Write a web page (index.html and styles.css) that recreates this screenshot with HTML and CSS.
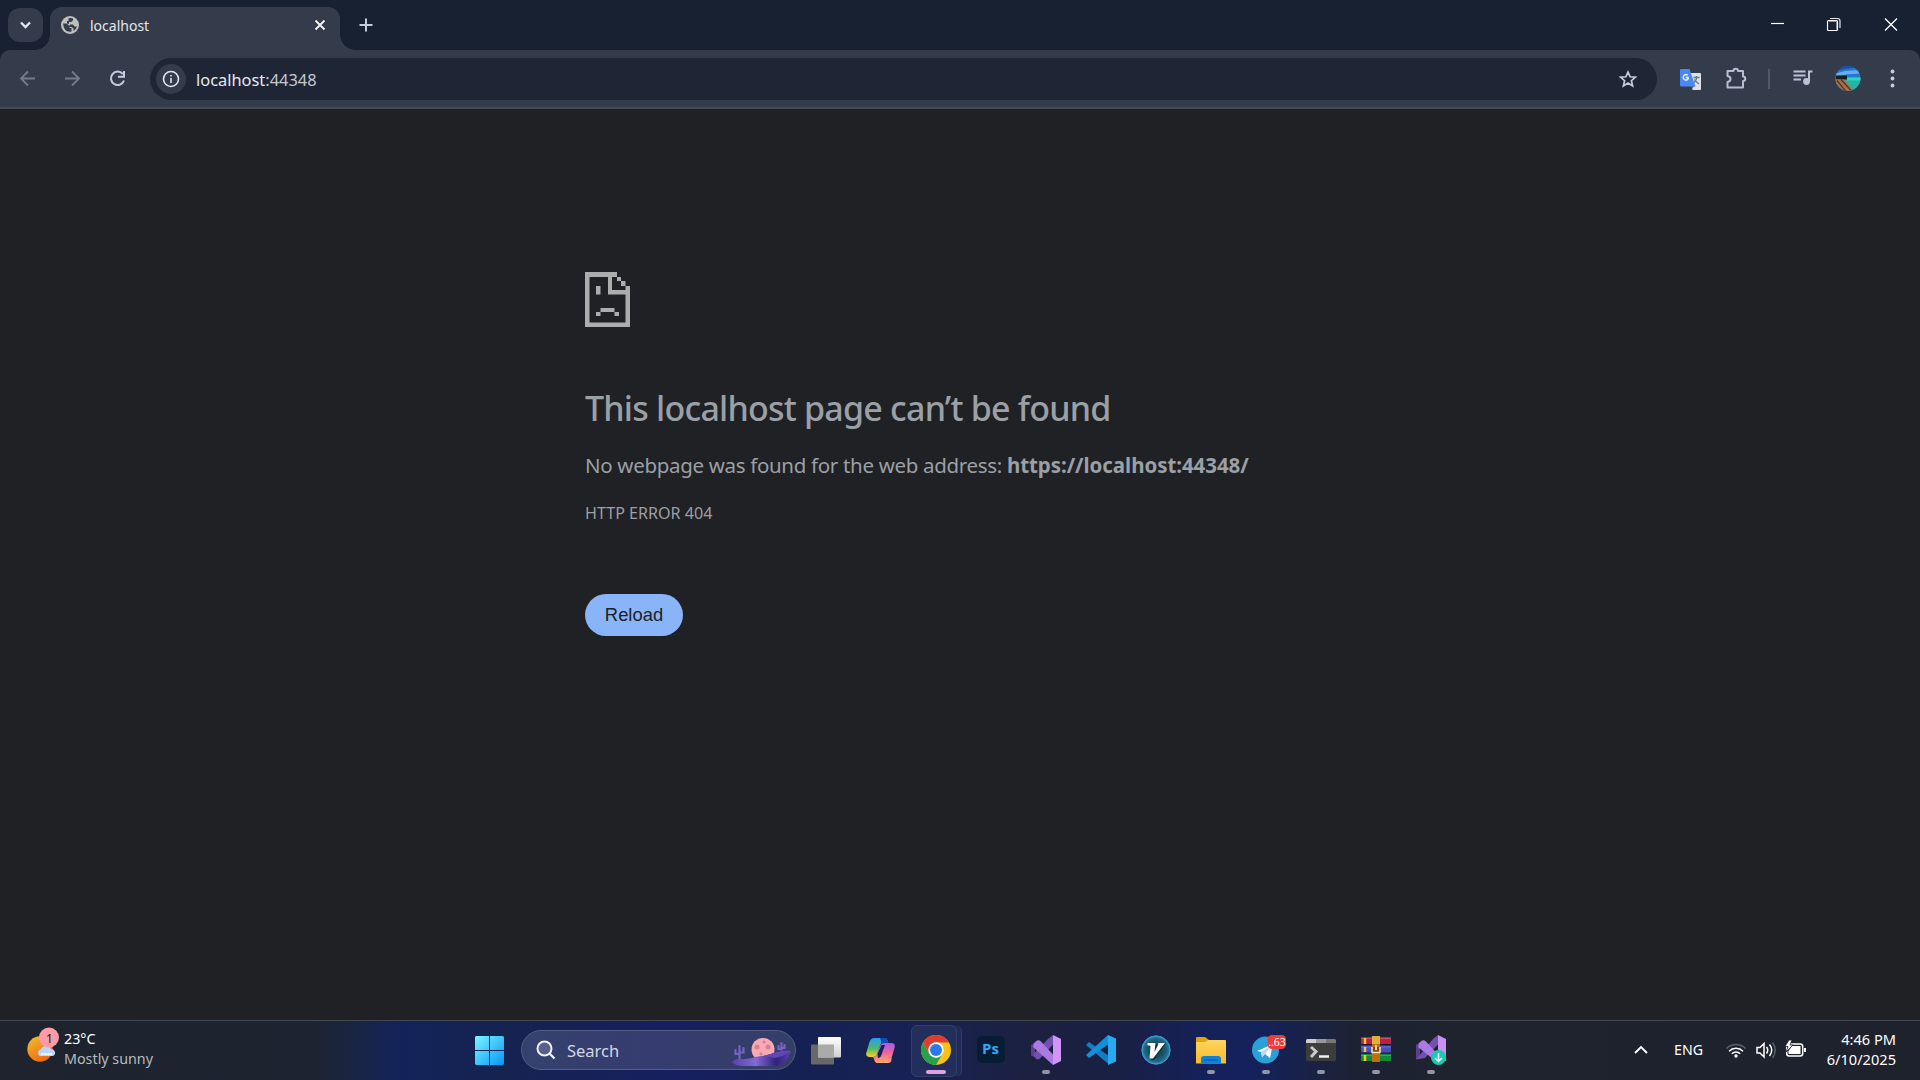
FILE: index.html
```html
<!DOCTYPE html>
<html lang="en">
<head>
<meta charset="utf-8">
<title>localhost</title>
<link rel="stylesheet" href="styles.css">
</head>
<body>
<div class="screen">
  <header class="tabstrip">
    <button class="tab-search" aria-label="Search tabs"><svg width="35" height="34"><path d="M13 14.5l4.5 4.5 4.5-4.5" fill="none" stroke="#e3e6ef" stroke-width="2.3"/></svg></button>
    <div class="tab">
      <svg class="globe" width="18" height="18" viewBox="0 0 18 18"><circle cx="9" cy="9" r="9" fill="#bfbfbf"/><path d="M2 7.500h3.500l3 2.500v2h2v3.500Q3 17 2 7.500zM7.500 2.200Q10 1.600 12 2.500v2L10 6H8v2l-2-.5V5h1.500zM9 8.500h3l1.500 2H16Q15 14 12.500 15v-2.500L10.500 11H8z" fill="#343c4c"/></svg>
      <span class="tab-title">localhost</span>
      <svg class="tab-close" width="12" height="12"><path d="M1.500 1.500l9 9M10.500 1.500l-9 9" stroke="#f1f2f5" stroke-width="1.900"/></svg>
    </div>
    <svg class="new-tab" width="14" height="14"><path d="M7 .5v13M.5 7h13" stroke="#c5cbdd" stroke-width="2"/></svg>
    <div class="window-controls">
      <svg width="57" height="50"><path d="M22 23.500h13" stroke="#fff" stroke-width="1.200"/></svg>
      <svg width="57" height="50"><path d="M24 18.500h7.500q2.500 0 2.500 2.500v7" fill="none" stroke="#e6e8ec" stroke-width="1.200"/><rect x="21.500" y="20.500" width="10" height="10" rx="1" fill="none" stroke="#fff" stroke-width="1.200"/><path d="M22.500 21.500h8v8" fill="none" stroke="#8a909b"/></svg>
      <svg width="57" height="50"><path d="M22 18.500l12 12M34 18.500l-12 12" stroke="#fff" stroke-width="1.300"/></svg>
    </div>
  </header>

  <nav class="toolbar">
    <svg class="slot" viewBox="-22.5 -28.5 45 57"><path d="M7.500 0H-6M.5-7l-7 7 7 7" fill="none" stroke="#727a8b" stroke-width="1.900"/></svg>
    <svg class="slot" viewBox="-22.5 -28.5 45 57"><path d="M-7.500 0H6M-.5-7l7 7-7 7" fill="none" stroke="#727a8b" stroke-width="1.900"/></svg>
    <svg class="slot reload-icon" viewBox="-22.5 -28.5 46 57"><path d="M5.300-4.500A6.700 6.700 0 1 0 6.500 2M6.500-7.500v5.800H.5" fill="none" stroke="#c6cce0" stroke-width="2"/></svg>
    <div class="omnibox">
      <span class="site-info"><svg width="18" height="18" viewBox="0 0 18 18"><circle cx="9" cy="9" r="7.500" fill="none" stroke="#e1e4ee" stroke-width="1.600"/><path d="M9 8v5M9 5v1.600" stroke="#e1e4ee" stroke-width="1.600"/></svg></span>
      <span class="url"><b>localhost</b>:44348</span>
      <svg class="star" width="20" height="20" viewBox="-10 -10.5 20 20"><path d="M0-7.500L2.100-2.700 7.400-2.300 3.400 1.200 4.600 6.400 0 3.600-4.600 6.400-3.400 1.200-7.400-2.300-2.100-2.700z" fill="none" stroke="#c9cdda" stroke-width="1.700"/></svg>
    </div>
    <svg class="slot translate" viewBox="-22.5 -28.5 45 57"><path d="M0-5.500H9.500q1 0 1 1v15q0 1-1 1H2z" fill="#dfe1e3"/><path d="M3-1h6M6-2.500V-1c0 3-2 5-4 6M4 1c1 2 3 3.500 4.500 4.500" fill="none" stroke="#5d7d86" stroke-width="1.300"/><path d="M1 6.500h4l-4 4z" fill="#3059c9"/><path d="M-9.500-9.500H-1L5 8H-9.500q-1 0-1-1v-15.500q0-1 1-1z" fill="#4a88f5"/><path d="M-1.800-1h-3M-2.800-3.200A2.700 2.700 0 1 0-1.900-.8" fill="none" stroke="#fff" stroke-width="1.300"/></svg>
    <svg class="slot" viewBox="-23 -28.500 45 57"><path d="M-8-7.500h5.500a2 2 0 0 1 4.500 0H7v5.500a2.200 2.200 0 0 1 0 4.500V9H-8.500V3.500q3-.5 3-3t-3-3V-7.500z" fill="none" stroke="#b7bed2" stroke-width="2" stroke-linejoin="round"/></svg>
    <span class="divider"></span>
    <svg class="slot" viewBox="-22.500 -28.500 45 57"><path d="M-10-7H2M-10-3H2M-10 1h7.500M5.500 3V-7h3.500" fill="none" stroke="#bbc2d7" stroke-width="2"/><circle cx="3" cy="3" r="3.400" fill="#bbc2d7"/></svg>
    <svg class="slot avatar" viewBox="-22 -28.500 44 57"><defs><clipPath id="face"><circle r="12.500"/></clipPath></defs><g clip-path="url(#face)"><path d="M-13-13h26V0h-26z" fill="#2478cf"/><path d="M-13-13h26v3Q2-12-13-7z" fill="#1c4fa5"/><path d="M-13-5Q0-9 13-8v3Q0-5-13-2z" fill="#65aeea"/><path d="M-13-1h26v14h-26z" fill="#22b5a5"/><path d="M-1-1h14v3H-1z" fill="#2bd5c4"/><path d="M-12-3h11v4h-11z" fill="#171e22"/><path d="M-13 1h9L7 13h-20z" fill="#a76f4b"/><path d="M-11 2l9 11M-7 1L4 13M-13 6l6 7" stroke="#49332c" stroke-width="1.200"/></g></svg>
    <svg class="slot" viewBox="-22.500 -28.500 45 57"><g fill="#c6cce0"><circle cy="-7" r="1.900"/><circle r="1.900"/><circle cy="7" r="1.900"/></g></svg>
  </nav>

  <main class="page">
    <section class="error">
      <svg class="sad-page" width="45" height="55" viewBox="0 0 45 55"><path d="M0 0h32v5H27v13h13.500V14H45v41H0zM4.500 5v45.500h36V22.500H23V5z" fill="#adadad" fill-rule="evenodd"/><path d="M32 5h4v4h-4zM36 9h4.500v5H36zM11 14h4.500v8.500H11zM15.500 36H29.500v4H34v4h-4.500v-4h-14v4H11v-4h4.500z" fill="#adadad"/></svg>
      <h1>This localhost page can’t be found</h1>
      <p class="summary">No webpage was found for the web address: <strong>https://localhost:44348/</strong></p>
      <p class="code">HTTP ERROR 404</p>
      <button class="reload">Reload</button>
    </section>
  </main>

  <footer class="taskbar">
    <div class="weather">
      <svg width="37" height="40" viewBox="26 1025 37 40"><defs><linearGradient id="sun" x2=".6" y2="1"><stop stop-color="#f4bd32"/><stop offset="1" stop-color="#ef6a10"/></linearGradient></defs><circle cx="40" cy="1049" r="12.700" fill="url(#sun)"/><path d="M40 1056a3.500 3.500 0 0 1 .5-6.500q2-4 6-3.500t4.500 3.500a3.300 3.300 0 0 1 1.500 6.500z" fill="#b9d7fa"/><path d="M41 1054h11" stroke="#e8f1ff" stroke-width="2"/><circle cx="49" cy="1037.500" r="10" fill="#ff9ba6"/><text x="49.5" y="1042.500" class="badge-text">1</text></svg>
      <div class="weather-text"><span>23°C</span><span class="muted">Mostly sunny</span></div>
    </div>

    <div class="apps">
      <svg class="start" width="29" height="29" viewBox="0 0 29 29"><defs><linearGradient id="win" gradientUnits="userSpaceOnUse" x2="29" y2="29"><stop stop-color="#7af5ff"/><stop offset="1" stop-color="#0695fb"/></linearGradient></defs><path d="M1 0h13v14H0V1zM15 0h13l1 1v13H15zM0 15h14v14H1l-1-1zM15 15h14v13l-1 1H15z" fill="url(#win)"/></svg>
      <div class="search">
        <svg width="20" height="20" viewBox="0 0 20 20"><circle cx="8.500" cy="8.500" r="7" fill="#56618c" stroke="#eef0f6" stroke-width="2"/><path d="M13.500 13.500l5 5" stroke="#eef0f6" stroke-width="2.300"/></svg>
        <span>Search</span>
        <svg class="desert" width="62" height="30" viewBox="0 0 62 30"><defs><linearGradient id="dune"><stop stop-color="#5840ad"/><stop offset=".4" stop-color="#826bd4"/><stop offset=".75" stop-color="#33217c"/><stop offset="1" stop-color="#5943ad"/></linearGradient></defs><circle cx="33" cy="12.500" r="11.500" fill="#f8a9b4"/><g fill="#dd7e91"><circle cx="27" cy="10" r="2.500"/><circle cx="34" cy="5" r="1.500"/><circle cx="38" cy="10" r="2.500"/><circle cx="31" cy="17" r="1.500"/></g><path d="M9.500 24V9M5.500 13v4h4M13.500 11v4.500h-4M51.500 16V6M48.500 9v3h3M54.500 8v3h-3" fill="none" stroke="#7862c8" stroke-width="2.200" stroke-linecap="round"/><path d="M2 25q4-4 9-3 9 0 14-2 13-1 22-5.500 7-2 14-.5-3 12-14 15H13Q5 29 2 25z" fill="url(#dune)"/><path d="M24 20.500Q38 19 46 15q8-2 15-1-6 5-16 7-9-2-21-.5z" fill="#5f48b4"/></svg>
      </div>

      <span class="app"><svg viewBox="0 0 30 30"><defs><linearGradient id="tv" x2="0" y2="1"><stop stop-color="#fff"/><stop offset="1" stop-color="#cfcfcf"/></linearGradient></defs><rect y="9.500" width="23" height="20" rx="1" fill="#686868"/><rect x="7" y="2" width="23" height="20.500" rx="1" fill="url(#tv)"/><path d="M7 9.500h16v13H7z" fill="#aaa"/></svg></span>
      <span class="app"><svg viewBox="0 0 30 30"><defs><linearGradient id="cpa" x2="0" y2="1"><stop stop-color="#229df4"/><stop offset=".55" stop-color="#4fb96c"/><stop offset="1" stop-color="#ffd41c"/></linearGradient><linearGradient id="cpb" x2="0" y2="1"><stop stop-color="#a858ee"/><stop offset=".5" stop-color="#f1649b"/><stop offset="1" stop-color="#ffab67"/></linearGradient></defs><path d="M8 3h11q2 0 3 4h-4q-3 0-4 4l-3 8q-1 3-4 3H4q-5 0-3.500-5l3-10Q5 3 8 3z" fill="url(#cpa)"/><path d="M14 3h5q2 0 3 4l1 2h-5q-3 0-3-3z" fill="#1549bf"/><path d="M22 28H11q-2 0-3-4l-1-2q3 0 4-3l3-8q1-3 4-3h7q5 0 3.500 5l-3 10Q26 28 22 28z" fill="url(#cpb)"/><path d="M15.500 10h3.500l-4 11q-1 2-3 2l-.500-4z" fill="#13225b"/></svg></span>
      <span class="app active"><svg viewBox="0 0 30 30"><circle cx="15" cy="15" r="15" fill="#fbc116"/><path d="M2 7.500A15 15 0 0 0 15 30l6.500-11.200H8.500z" fill="#28a148"/><path d="M2 7.500l6.500 11.300L15 7.500h13A15 15 0 0 0 2 7.500z" fill="#e33b2e"/><circle cx="15" cy="15" r="7.700" fill="#fff"/><circle cx="15" cy="15" r="6" fill="#277ae8"/></svg></span>
      <span class="app"><span class="ps">Ps</span></span>
      <span class="app running"><svg viewBox="0 0 30 30"><path d="M0 10l4-2.500v15L0 20.500z" fill="#5d3f8e"/><path d="M4 22.500L2 19.500 17 4l5-4v9.500L9 23.500Q6 26 4 22.500z" fill="#7450ae"/><path d="M3 8l3-2.500q2-1 4 1l12 13V30L2 12z" fill="#ab79e2"/><path d="M22 0l8 4v22l-8 4z" fill="#d394fa"/></svg></span>
      <span class="app"><svg viewBox="0 0 30 30"><path d="M0 10l3-3 20 14v8.500z" fill="#137dc4"/><path d="M0 20L22 0v9.500L3 23z" fill="#168fd9"/><path d="M22 0l8 3.500v23L22 30z" fill="#28aaf1"/></svg></span>
      <span class="app"><svg viewBox="0 0 30 30"><defs><radialGradient id="vv"><stop offset=".5" stop-color="#164d62"/><stop offset=".85" stop-color="#246c8b"/><stop offset="1" stop-color="#369ed1"/></radialGradient></defs><circle cx="15" cy="15" r="14.200" fill="url(#vv)" stroke="#399bcc"/><path d="M9 9h7l-1 10 6-11h4L13 25h-3l1-13H8z" fill="#0b2e40"/><path d="M6.500 8h8l-1 9 4-8-1-1h7.500L12 23.500H8.500l1-12.500-3-1z" fill="#fff"/></svg></span>
      <span class="app running"><svg viewBox="0 0 30 30"><defs><linearGradient id="fo" x2="0" y2="1"><stop stop-color="#ffd65d"/><stop offset="1" stop-color="#f8b92b"/></linearGradient></defs><path d="M0 3q0-1 1-1h8l4 3v4H0z" fill="#e5a10b"/><path d="M0 7h9l3-2h17q1 0 1 1v22q0 .5-.5.5H.5Q0 28.500 0 28z" fill="url(#fo)"/><path d="M5 28.500V24q0-3 3-3h14q3 0 3 3v4.500z" fill="#1180da"/><path d="M8 25h14" stroke="#0b5bab" stroke-width="1.200"/></svg></span>
      <span class="app running"><svg class="wide" viewBox="0 0 34 30"><circle cx="13.500" cy="15" r="13.500" fill="#2aa0db"/><path d="M5 16l16-7-3 14-5-4-3 3-1-5z" fill="#fff"/><path d="M9 17l10-6-6 8-3 3z" fill="#b8d7e9"/><rect x="15.500" y="0" width="18.500" height="14" rx="4.500" fill="#f13b3b"/><text x="25" y="10.800" class="count">..63</text></svg></span>
      <span class="app running"><svg viewBox="0 0 30 30"><rect y="4" width="30" height="22" rx="1.500" fill="#3d3d3d"/><path d="M0 8V5.500Q0 4 1.500 4H10v4z" fill="#cfcfcf"/><path d="M10 4h10v4H10z" fill="#999"/><path d="M20 4h8.500Q30 4 30 5.500V8H20z" fill="#777"/><path d="M5 12l5 4.500L5 22" fill="none" stroke="#c9c9c9" stroke-width="3"/><path d="M13 21.500h10" stroke="#f2f2f2" stroke-width="2.500"/></svg></span>
      <span class="app running"><svg viewBox="0 0 30 30"><path d="M0 2h30v8H0z" fill="#bd2141"/><path d="M0 10.500h30v8H0z" fill="#4b4dc0"/><path d="M0 19h30v8H0z" fill="#128a38"/><path d="M0 3.500h30M0 12h30M0 20.500h30" stroke="#fff" opacity=".2"/><path d="M0 9.500h30M0 18h30M0 26.500h30" stroke="#13182b"/><path d="M4 3v6M4 12v5M4 20v6" stroke="#ffc62a" stroke-width="2.500"/><path d="M11 1h8v26h-8z" fill="#c36a18"/><path d="M11 1h8v8h-8z" fill="#dfb03a"/><path d="M11 12v5.500h8V12" fill="#8e440b" stroke="#f3e5c5" stroke-width="1.500"/><path d="M15 10v5" stroke="#f6d89f" stroke-width="2"/></svg></span>
      <span class="app running"><svg viewBox="0 0 30 30"><path d="M0 10l4-2.500v15L0 24.500z" fill="#5d3f8e"/><path d="M0 24.500L17 4l5-4v9.500L9 23z" fill="#7450ae"/><path d="M3 8l3-2.500q2-1 4 1l12 13V28L2 12z" fill="#ab79e2"/><path d="M22 0l8 4v22h-8z" fill="#cb91ef"/><circle cx="22.500" cy="22.500" r="7.500" fill="#1bc9b1"/><path d="M22.500 18v8.500M19 23l3.500 3.500L26 23" fill="none" stroke="#fff" stroke-width="1.500"/></svg></span>
    </div>

    <div class="tray">
      <svg class="chevron" width="14" height="9"><path d="M1 8l6-6 6 6" fill="none" stroke="#fff" stroke-width="1.900"/></svg>
      <span class="lang">ENG</span>
      <svg class="status" width="82" height="20" viewBox="1726 1040 82 20"><g fill="none" stroke="#fff" stroke-width="1.500"><path d="M1726.500 1048.500a13.500 13.500 0 0 1 19 0" stroke="#59606b"/><path d="M1729 1051.200a10 10 0 0 1 14 0M1731.800 1053.800a6 6 0 0 1 8.400 0"/><path d="M1757 1047.500h3l4-4v13.500l-4-4h-3z"/><path d="M1766.500 1047q2.500 3 0 6.500M1769.500 1044.500q4.500 5.500 0 11.500"/><path d="M1772.500 1042.500q5.500 7.500 0 15.500" stroke="#59606b"/><rect x="1786.700" y="1044" width="16" height="12" rx="2.500"/></g><circle cx="1736" cy="1056" r="1.700" fill="#fff"/><path d="M1792 1046h8.500v8h-12v-3zM1804 1048h2v4h-2z" fill="#fff"/><path d="M1789 1040l-4 6.500h3l-2 5.500 7-7h-3l2-5z" fill="#fff" stroke="#1d222d" stroke-width=".8"/></svg>
      <div class="clock"><span>4:46 PM</span><span>6/10/2025</span></div>
    </div>
  </footer>
</div>
</body>
</html>
```

FILE: styles.css
```css
* { box-sizing: border-box; }
body { margin: 0; background: #202124; font-family: "Noto Sans", "Open Sans", sans-serif; }
button { border: 0; padding: 0; font: inherit; }
svg { display: block; flex: none; }
.screen { width: 1920px; height: 1080px; display: flex; flex-direction: column; overflow: hidden; background: #202124; }

.tabstrip { height: 50px; flex: none; display: flex; background: #182131; position: relative; z-index: 1; }
.tab-search { width: 35px; height: 34px; margin: 8px 7px 0 8px; border-radius: 12px; background: #343c4c; }
.tab { position: relative; width: 290px; height: 43px; margin-top: 7px; padding: 0 14px 7px 9px; display: flex; align-items: center; background: #343c4c; border-radius: 12px 12px 0 0; }
.tab::before, .tab::after { content: ""; position: absolute; bottom: 0; width: 15px; height: 15px; }
.tab::before { left: -15px; background: radial-gradient(circle at 0 0, transparent 14.500px, #343c4c 15px); }
.tab::after { right: -15px; background: radial-gradient(circle at 100% 0, transparent 14.500px, #343c4c 15px); }
.globe { margin: 0 11px 0 2px; }
.tab-title { padding-top: 1px; font-size: 14px; line-height: 20px; color: #e4e6eb; margin-right: auto; }
.new-tab { margin: 18px 0 0 18.500px; }
.window-controls { display: flex; margin-left: auto; }

.toolbar { height: 59px; flex: none; padding: 0 5px; display: flex; background: #343c4c; border-bottom: 2px solid #484b50; border-radius: 10px 10px 0 0; box-shadow: 0 -10px 0 #182131; }
.slot { width: 45px; height: 57px; }
.reload-icon { width: 46px; }
.avatar { width: 44px; }
.omnibox { flex: 1; height: 42px; margin: 8px 11px 0 9px; padding: 0 19px 0 6px; display: flex; align-items: center; background: #1e2636; border-radius: 21px; }
.site-info { width: 30px; height: 30px; border-radius: 50%; display: grid; place-items: center; background: #343c4c; }
.url { margin-left: 10px; padding-top: 1px; font-size: 16.400px; line-height: 24px; color: #c3c8d2; }
.url b { font-weight: 400; color: #e6e8ee; }
.star { margin-left: auto; }
.divider { width: 2px; height: 20px; margin: 19px 11px 0 10px; background: #4f586c; }

.page { flex: 1; }
.error { width: 750px; margin: 163px 0 0 585px; display: flex; flex-direction: column; align-items: flex-start; color: #9aa0a6; }
.error h1 { margin: 61px 0 0; font-size: 34px; line-height: 40px; font-weight: 500; letter-spacing: -.78px; white-space: nowrap; }
.summary { margin: 22px 0 0; font-size: 20.500px; line-height: 30px; letter-spacing: -.32px; white-space: nowrap; }
.summary strong { letter-spacing: -.06px; }
.code { margin: 21px 0 0; font-size: 16.100px; line-height: 24px; white-space: nowrap; }
.reload { width: 98px; height: 42px; margin-top: 69px; border-radius: 21px; background: #8ab4f8; color: #202124; font: 18.400px/42px "Liberation Sans", Arial, sans-serif; }

.taskbar { height: 60px; flex: none; display: flex; justify-content: space-between; border-top: 1px solid #454951; background: linear-gradient(90deg, #1e232e 0, #1d2330 310px, #182543 355px, #13235a 400px, #152350 500px, #171f60 680px, #152152 800px, #182155 900px, #1c2140 1030px, #1a2043 1110px, #14215a 1210px, #15215a 1260px, #1c2235 1350px, #1e232d 1450px, #1d222d 100%); }
.weather { width: 475px; padding: 4px 0 0 26px; display: flex; color: #fff; font-size: 14.300px; line-height: 20px; }
.weather-text, .clock { display: flex; flex-direction: column; }
.weather-text { margin: 4px 0 0 1px; }
.muted { color: #b7babf; }
.badge-text { font: 12px "Noto Sans", sans-serif; text-anchor: middle; fill: #28141a; }
.apps { display: flex; }
.start { margin: 15px 17px 0 0; }
.search { width: 275px; height: 40px; margin: 9px 2px 0 0; padding: 0 3px 0 14px; display: flex; align-items: center; border: 1px solid #555e83; border-radius: 20px; background: linear-gradient(90deg, #34416e, #363c70 50%, #343f67); color: #d3d7e2; font-size: 16.500px; }
.search > span { margin-left: 11px; }
.desert { margin: 4px 0 0 auto; }
.app { position: relative; width: 55px; height: 58px; display: grid; place-items: center; }
.app > svg { width: 30px; height: 30px; }
.app > svg.wide { width: 34px; margin-left: 6px; }
.app.running::after, .app.active::after { content: ""; position: absolute; top: 49px; left: 23.500px; width: 8px; height: 4px; border-radius: 2px; background: #9195a5; }
.app.active::after { left: 17.500px; width: 20px; background: #dfa0e0; }
.app.active::before { content: ""; position: absolute; left: 2.500px; top: 4px; width: 44px; height: 50px; border: 1px solid #333f6b; border-radius: 6px; background: #222e5c; box-shadow: 5px 0 0 -1px #202b57, 6px 0 0 -1px #303a62; }
.app.active svg { position: relative; }
.ps { width: 28px; height: 27px; margin-top: -2px; border-radius: 5px; background: #071d34; color: #31a8ff; font: 700 15px/25px "Open Sans", sans-serif; text-align: center; }
.count { font: 10.500px "Noto Sans", sans-serif; text-anchor: middle; fill: #fff; }
.tray { width: 462px; padding: 0 24px 0 0; display: flex; justify-content: flex-end; color: #fff; font-size: 14px; line-height: 20px; }
.chevron { margin: 24px 26px 0 0; }
.lang { margin: 19px 23px 0 0; font-size: 14.200px; }
.status { margin: 19px 0 0; }
.clock { width: 88px; margin-top: 8px; align-items: flex-end; font-size: 14.600px; }
```
